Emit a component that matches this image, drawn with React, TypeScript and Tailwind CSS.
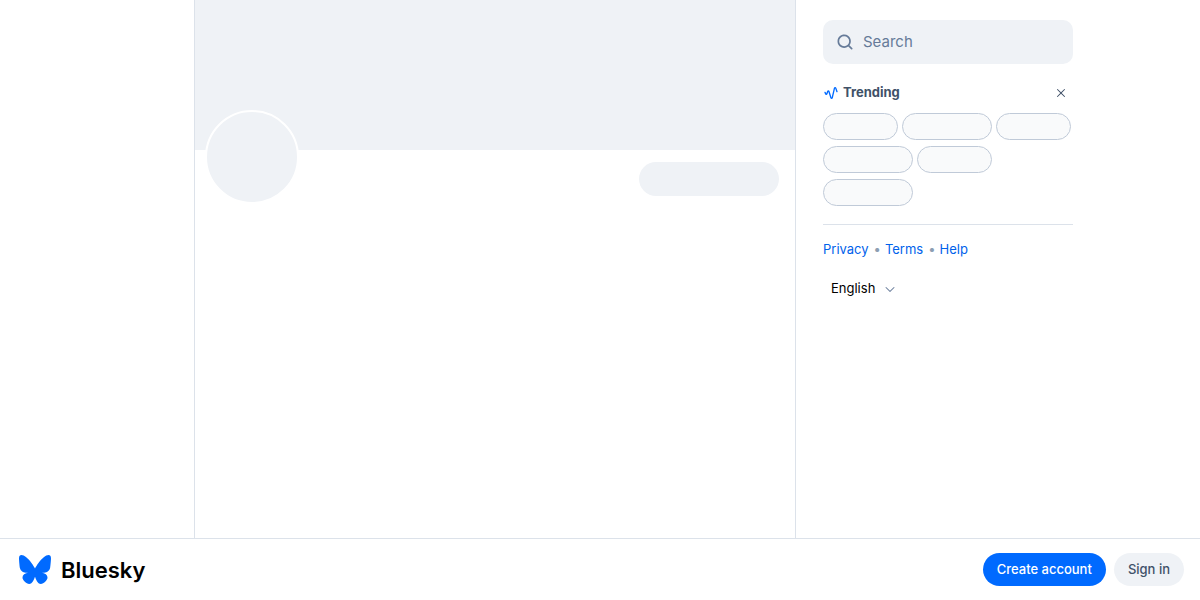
import type { ReactNode } from "react"

const trendingPills = [75, 90, 75, 90, 75, 90]

const footerLinks = [
  { label: "Privacy", href: "#privacy" },
  { label: "Terms", href: "#terms" },
  { label: "Help", href: "#help" },
]

const Icon = ({ className, children }: { className: string; children: ReactNode }) => (
  <svg className={className} viewBox="0 0 24 24" fill="currentColor" aria-hidden="true">
    {children}
  </svg>
)

const ProfilePlaceholder = () => {
  return (
    <main className="w-[602px] shrink-0 border-x border-[#dce2ea]">
      {/* Banner */}
      <div className="h-[150px] bg-[#eff2f6]" />

      <div className="relative flex justify-end px-4 pt-3">
        {/* Avatar */}
        <div className="absolute -top-10 left-2.5 size-[94px] rounded-full border-2 border-white bg-[#eff2f6]" />
        <div className="h-[34px] w-[140px] rounded-full bg-[#eff2f6]" />
      </div>
    </main>
  )
}

const SearchBox = () => {
  return (
    <label className="flex h-11 items-center gap-2 rounded-[10px] bg-[#eff2f6] px-3 text-[#667b99]">
      <Icon className="size-5 shrink-0">
        <path
          fillRule="evenodd"
          d="M11 5a6 6 0 1 0 0 12 6 6 0 0 0 0-12Zm-8 6a8 8 0 1 1 14.32 4.906l3.387 3.387a1 1 0 0 1-1.414 1.414l-3.387-3.387A8 8 0 0 1 3 11Z"
        />
      </Icon>
      <input
        type="search"
        aria-label="Search"
        placeholder="Search"
        className="w-full min-w-0 bg-transparent text-[15px] text-black outline-none placeholder:text-[#667b99]"
      />
    </label>
  )
}

const Trending = () => {
  return (
    <section className="border-b border-[#dce2ea] pt-5 pb-[18px]">
      <div className="flex h-[17px] items-center gap-1">
        <Icon className="size-4 text-[#006aff]">
          <path d="m18.192 5.004 1.864 5.31a1 1 0 0 0 1.887-.662L20.08 4.34c-.665-1.893-3.378-1.741-3.834.207l-3.381 14.449-2.985-9.605C9.3 7.531 6.684 7.506 6.07 9.355l-1.18 3.56-.969-2.312a1 1 0 0 0-1.844.772l.97 2.315c.715 1.71 3.159 1.613 3.741-.144l1.18-3.56 2.985 9.605c.607 1.952 3.392 1.848 3.857-.138l3.381-14.449Z" />
        </Icon>
        <h2 className="flex-1 text-[13px] font-bold text-[#405168]">Trending</h2>
        <button type="button" aria-label="Hide trending" className="px-1.5 text-[#405168]">
          <Icon className="size-3">
            <path d="M4.293 4.293a1 1 0 0 1 1.414 0L12 10.586l6.293-6.293a1 1 0 1 1 1.414 1.414L13.414 12l6.293 6.293a1 1 0 0 1-1.414 1.414L12 13.414l-6.293 6.293a1 1 0 0 1-1.414-1.414L10.586 12 4.293 5.707a1 1 0 0 1 0-1.414Z" />
          </Icon>
        </button>
      </div>

      <div className="mt-3 flex flex-wrap gap-x-1 gap-y-1.5">
        {trendingPills.map((width, i) => (
          <div
            key={i}
            className="h-[27px] rounded-full border border-[#c0cad8] bg-[#f9fafb]"
            style={{ width }}
          />
        ))}
      </div>
    </section>
  )
}

const Sidebar = () => {
  return (
    <div className="w-[250px] pt-5">
      <SearchBox />
      <Trending />

      <nav className="mt-4 flex items-center gap-[5px] text-[13px] leading-[17px]">
        {footerLinks.map((link, i) => (
          <span key={link.label} className="flex items-center gap-1">
            {i > 0 && <span className="text-[#8c9eb2]">•</span>}
            <a href={link.href} className="text-[#0062eb] hover:underline">
              {link.label}
            </a>
          </span>
        ))}
      </nav>

      <div className="relative mt-4 inline-flex items-center">
        <select
          aria-label="App language"
          className="h-[30px] appearance-none bg-transparent pr-6 pl-2 text-[13px] text-black outline-none"
        >
          <option>English</option>
        </select>
        <Icon className="pointer-events-none absolute right-1 size-3 text-[#667b99]">
          <path d="M3.293 8.293a1 1 0 0 1 1.414 0L12 15.586l7.293-7.293a1 1 0 1 1 1.414 1.414l-8 8a1 1 0 0 1-1.414 0l-8-8a1 1 0 0 1 0-1.414Z" />
        </Icon>
      </div>
    </div>
  )
}

const BottomBar = () => {
  return (
    <footer className="sticky bottom-0 flex items-center justify-between border-t border-[#dce2ea] bg-white py-3.5 pr-4 pl-[19px]">
      <a href="#home" className="flex items-center gap-2.5">
        <svg className="h-[29px] w-8 text-[#006aff]" viewBox="2 3 20 18" fill="currentColor" aria-hidden="true">
          <path d="M6.335 4.212c2.293 1.76 4.76 5.327 5.665 7.241.906-1.914 3.372-5.482 5.665-7.241C19.319 2.942 22 1.96 22 5.086c0 .624-.35 5.244-.556 5.994-.713 2.608-3.315 3.273-5.629 2.87 4.045.704 5.074 3.035 2.852 5.366-4.22 4.426-6.066-1.111-6.54-2.53-.086-.26-.126-.382-.127-.278 0-.104-.041.018-.128.278-.473 1.419-2.318 6.956-6.539 2.53-2.222-2.331-1.193-4.662 2.852-5.366-2.314.403-4.916-.262-5.63-2.87C2.35 10.33 2 5.71 2 5.086c0-3.126 2.68-2.144 4.335-.874Z" />
        </svg>
        <span className="text-[22px] leading-7 font-semibold text-black">Bluesky</span>
      </a>

      <div className="flex gap-2 text-[13px] leading-[17px] font-medium">
        <button type="button" className="rounded-full bg-[#006aff] px-3.5 py-2 text-white">
          Create account
        </button>
        <button type="button" className="rounded-full bg-[#eff2f6] px-3.5 py-2 text-[#405168]">
          Sign in
        </button>
      </div>
    </footer>
  )
}

const App = () => {
  return (
    <div className="flex min-h-screen flex-col bg-white font-[Inter,sans-serif]">
      <div className="flex flex-1">
        <div className="flex-[1_1_0px]" />
        <ProfilePlaceholder />
        {/* The right side gets 210px more than the left */}
        <aside className="flex-[1_1_210px] pl-[27px]">
          <Sidebar />
        </aside>
      </div>
      <BottomBar />
    </div>
  )
}

export default App
